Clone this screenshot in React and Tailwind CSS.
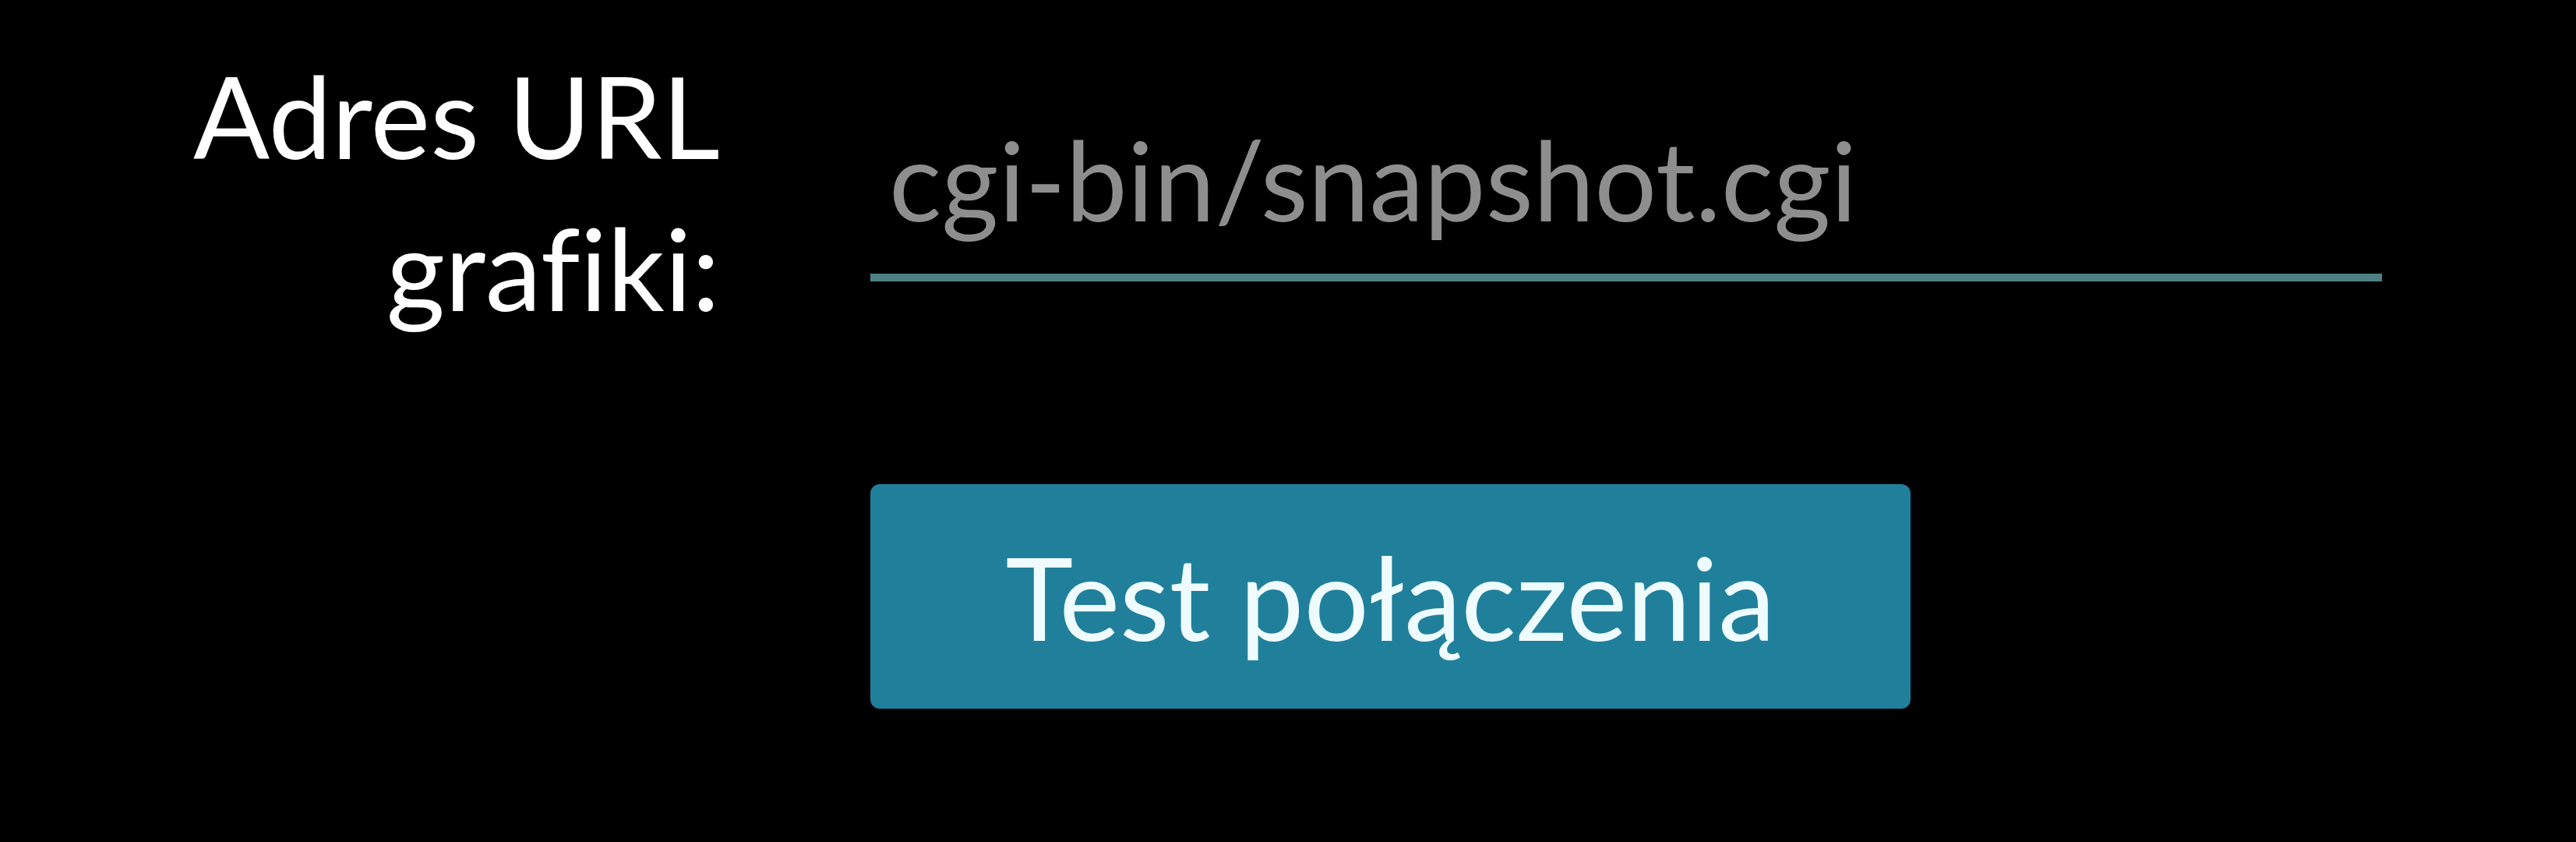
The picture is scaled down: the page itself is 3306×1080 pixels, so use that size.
export default function App() {
  return (
    <div className="w-[3306px] h-[1080px] bg-black font-['Lato',sans-serif] [font-variant-ligatures:none] overflow-hidden">
      <div className="flex pt-[51px]">
        <label className="w-[924px] shrink-0 text-right text-white text-[145px] leading-[195px]">
          Adres URL
          <br />
          grafiki:
        </label>
        <div className="ml-[193px] mt-[81px] w-[1940px] shrink-0">
          <div className="pl-[24px] text-[#8e8e8e] text-[141px] leading-[195px] pb-[24px] border-b-[10px] border-[#4f8184]">
            cgi-bin/snapshot.cgi
          </div>
        </div>
      </div>
      <div className="ml-[1117px] mt-[180px] w-[1335px] h-[288px] bg-[#20809b] rounded-[12px] flex items-center justify-center text-[#effcff] text-[147px] leading-none">
        Test połączenia
      </div>
    </div>
  );
}
